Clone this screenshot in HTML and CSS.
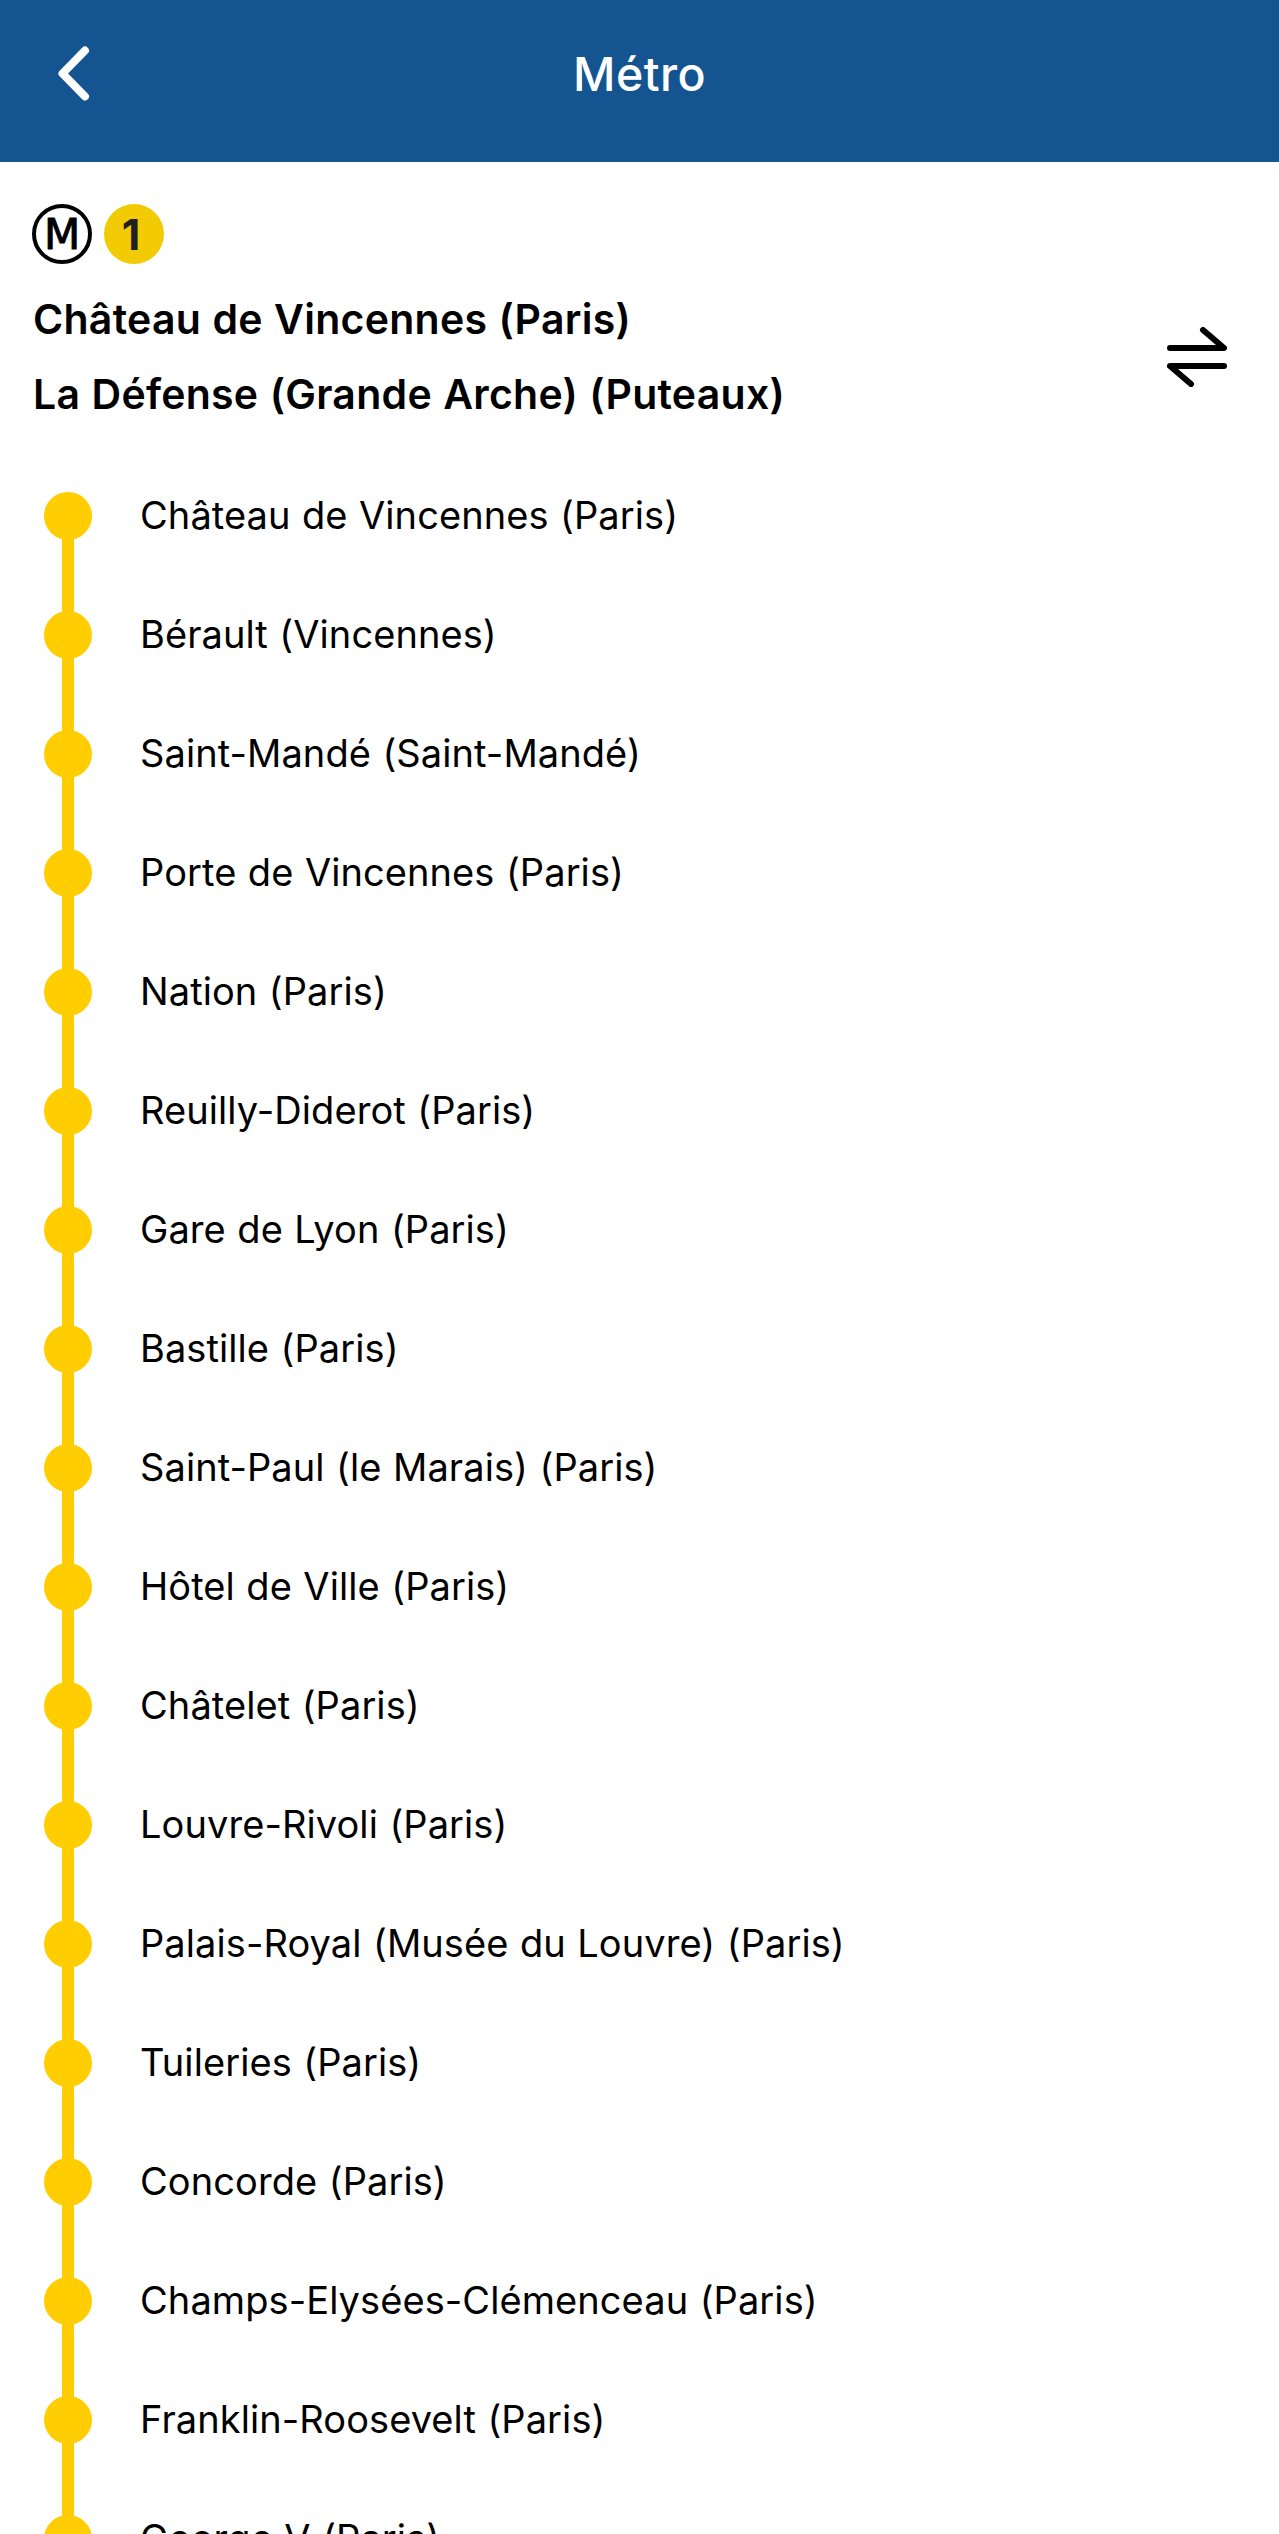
FILE: index.html
```html
<!DOCTYPE html>
<html lang="fr">
<head>
<meta charset="utf-8">
<title>Métro</title>
<link rel="stylesheet" href="styles.css">
</head>
<body>
<header class="topbar">
  <svg class="back" viewBox="0 0 36 60" aria-label="Retour"><path d="M31 7.500 8.500 30.500 31 53.500" fill="none" stroke="#fff" stroke-width="8" stroke-linecap="round" stroke-linejoin="round"/></svg>
  <h1 class="title">Métro</h1>
</header>
<section class="line-head">
  <div class="badges">
    <svg class="badge" viewBox="0 0 60 60"><circle cx="30" cy="30" r="28" fill="none" stroke="#000" stroke-width="4"/><text class="badge-m" x="30" y="45" text-anchor="middle">M</text></svg>
    <svg class="badge" viewBox="0 0 60 60"><circle cx="30" cy="30" r="30" fill="#f2cb05"/><text class="badge-one" x="17.800" y="45.700">1</text></svg>
  </div>
  <div class="direction">
    <div class="ends"><h2 class="end">Château de Vincennes (Paris)</h2><h2 class="end">La Défense (Grande Arche) (Puteaux)</h2></div>
    <svg class="swap" viewBox="0 0 60 60"><path d="M36 3 57 21H3M24 57 3 39H57" fill="none" stroke="#000" stroke-width="6" stroke-linecap="round" stroke-linejoin="round"/></svg>
  </div>
</section>
<ul class="stops">
  <li class="stop">Château de Vincennes (Paris)</li>
  <li class="stop">Bérault (Vincennes)</li>
  <li class="stop">Saint-Mandé (Saint-Mandé)</li>
  <li class="stop">Porte de Vincennes (Paris)</li>
  <li class="stop">Nation (Paris)</li>
  <li class="stop">Reuilly-Diderot (Paris)</li>
  <li class="stop">Gare de Lyon (Paris)</li>
  <li class="stop">Bastille (Paris)</li>
  <li class="stop">Saint-Paul (le Marais) (Paris)</li>
  <li class="stop">Hôtel de Ville (Paris)</li>
  <li class="stop">Châtelet (Paris)</li>
  <li class="stop">Louvre-Rivoli (Paris)</li>
  <li class="stop">Palais-Royal (Musée du Louvre) (Paris)</li>
  <li class="stop">Tuileries (Paris)</li>
  <li class="stop">Concorde (Paris)</li>
  <li class="stop">Champs-Elysées-Clémenceau (Paris)</li>
  <li class="stop">Franklin-Roosevelt (Paris)</li>
  <li class="stop">George V (Paris)</li>
</ul>
</body>
</html>
```
FILE: styles.css
```css
* { box-sizing: border-box; }
html, body { margin: 0; height: 2534px; overflow: hidden; }
body { background: #fff; color: #000; font-family: Inter, sans-serif; }
.topbar { display: grid; grid-template-columns: 90px 1fr 90px; align-items: center; height: 162px; padding-bottom: 14px; background: #145591; }
.back { width: 36px; height: 60px; margin-left: 54px; margin-top: -2px; }
.title { margin: 0; text-align: center; color: #fff; font-size: 46.5px; font-weight: 500; letter-spacing: 0.4px; line-height: 60px; }
.line-head { padding: 42px 52px 0 32px; }
.badges { display: flex; gap: 12px; height: 60px; }
.badge { width: 60px; height: 60px; }
.badge-m { font: 42px "DejaVu Sans", sans-serif; fill: #000; stroke: #000; stroke-width: 1px; stroke-linejoin: round; }
.badge-one { font: 700 43px Inter, sans-serif; fill: #231f20; }
.direction { display: flex; justify-content: space-between; align-items: center; margin-top: 18px; height: 150px; }
.ends { padding-left: 1px; }
.end { margin: 0; height: 75px; font-size: 41px; font-weight: 600; line-height: 75px; letter-spacing: 0.27px; word-spacing: 0.7px; white-space: nowrap; }
.swap { width: 60px; height: 60px; }
.stops { margin: 24px 0 0; padding: 0; list-style: none; }
.stop { display: grid; grid-template-columns: 48px 1fr; column-gap: 48px; align-items: center; height: 119px; padding: 0 0 1px 44px; font-size: 38px; line-height: 48px; letter-spacing: 0.08px; word-spacing: 0.7px; white-space: nowrap; background: linear-gradient(#ffcd00, #ffcd00) 62px 0 / 12px 100% no-repeat; }
.stop:first-child { background-position: 62px 60px; background-size: 12px 59px; }
.stop::before { content: ""; width: 48px; height: 48px; margin-top: 2px; border-radius: 50%; background: #ffcd00; }
```
